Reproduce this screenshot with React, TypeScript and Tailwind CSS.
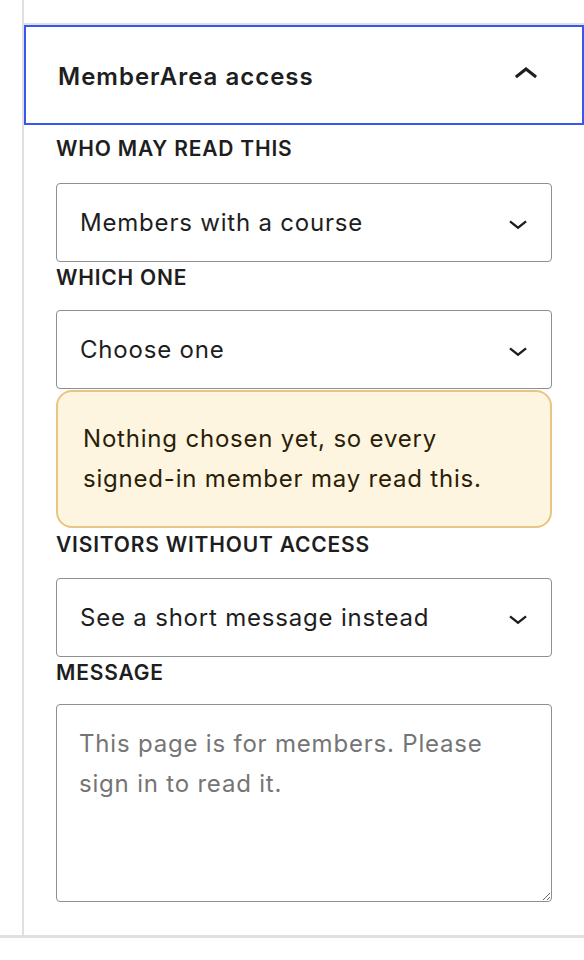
import React from "react";

const font = "font-['Inter','Liberation_Sans',sans-serif]";

function ChevronDown() {
  return (
    <svg viewBox="0 0 24 24" width="38" height="38" className="shrink-0 fill-[#1e1e1e]" aria-hidden="true">
      <path d="M17.5 11.6L12 16l-5.5-4.4.9-1.2L12 14l4.6-3.6 1 1.2z" />
    </svg>
  );
}

function ChevronUp() {
  return (
    <svg viewBox="0 0 24 24" width="48" height="48" className="shrink-0 fill-[#1e1e1e]" aria-hidden="true">
      <path d="M6.5 12.4L12 8l5.5 4.4-.9 1.2L12 10l-4.6 3.6-1-1.2z" />
    </svg>
  );
}

function Label({ children, className = "" }: { children: React.ReactNode; className?: string }) {
  return (
    <div className={`h-6 text-[21px] leading-6 font-semibold uppercase text-[#1e1e1e] tracking-[0.8px] ${className}`}>
      {children}
    </div>
  );
}

function Select({ value, className = "" }: { value: string; className?: string }) {
  return (
    <div
      className={`flex h-[79px] items-center justify-between rounded-[4px] border-[1.5px] border-[#8f8f8f] bg-white pl-[23px] pr-[14px] ${className}`}
    >
      <span className="text-[24px] leading-none text-[#1e1e1e] tracking-[0.8px]">{value}</span>
      <ChevronDown />
    </div>
  );
}

export default function App() {
  return (
    <div className={`min-h-[960px] w-full bg-white ${font}`}>
      <div className="border-b-[3px] border-[#e0e0e0]">
        <div className="ml-[22px] border-l-2 border-[#e0e0e0] pt-[23px]">
          <div className="border-t-2 border-[#e0e0e0]">
            <button
              type="button"
              className="flex h-[100px] w-full items-center justify-between border-2 border-[#3858e9] bg-white pl-[32px] pr-[32px] text-left"
            >
              <span className="pt-[4px] text-[24px] font-semibold text-[#1e1e1e] tracking-[1px]">MemberArea access</span>
              <ChevronUp />
            </button>
            <div className="px-8 pt-3 pb-[33px]">
              <Label>Who may read this</Label>
              <Select value="Members with a course" className="mt-[22px]" />
              <Label className="mt-1">Which one</Label>
              <Select value="Choose one" className="mt-5" />
              <div className="mt-[1px] rounded-[16px] border-2 border-[#e8c583] bg-[#fef5e0] px-[25px] py-[27px] text-[24px] leading-[40px] text-[#2b1e08] tracking-[0.8px]">
                Nothing chosen yet, so every <span className="whitespace-nowrap">signed-in</span> member may read this.
              </div>
              <Label className="mt-[5px]">Visitors without access</Label>
              <Select value="See a short message instead" className="mt-[21px]" />
              <Label className="mt-1">Message</Label>
              <textarea
                className="mt-[19px] block h-[198px] w-full resize-y rounded-[4px] border-[1.5px] border-[#8f8f8f] bg-white px-[22px] pt-[19px] text-[24px] leading-[40px] text-[#1e1e1e] tracking-[0.8px] outline-none placeholder:text-[#757575]"
                placeholder="This page is for members. Please sign in to read it."
              />
            </div>
          </div>
        </div>
      </div>
    </div>
  );
}
